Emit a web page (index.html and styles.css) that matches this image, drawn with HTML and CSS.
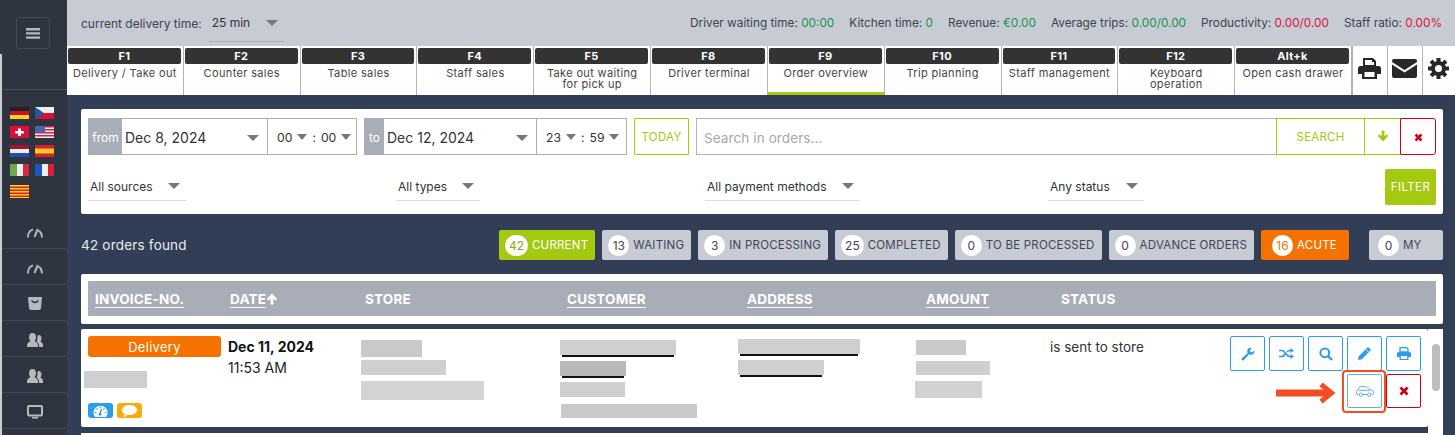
FILE: index.html
```html
<!DOCTYPE html>
<html lang="en">
<head>
<meta charset="utf-8">
<title>Order overview</title>
<link rel="stylesheet" href="styles.css">
</head>
<body>
<div class="app">
  <aside class="sidebar">
    <div class="side-top"><button class="burger"><svg width="14" height="11" viewBox="0 0 14 11"><path d="M0 0h14v2.400H0zM0 4.200h14v2.400H0zM0 8.400h14v2.400H0z" fill="#b5b8bc"/></svg></button></div>
    <div class="flags">
      <svg class="flag" viewBox="0 0 19 12"><path fill="#222" d="M0 0h19v4H0z"/><path fill="#c8102e" d="M0 4h19v4H0z"/><path fill="#fcd116" d="M0 8h19v4H0z"/></svg>
      <svg class="flag" viewBox="0 0 19 12"><path fill="#eee" d="M0 0h19v6H0z"/><path fill="#dc0f37" d="M0 6h19v6H0z"/><path fill="#1c5aa8" d="M0 0l9 6-9 6z"/></svg>
      <svg class="flag" viewBox="0 0 19 12"><path fill="#dc0f37" d="M0 0h19v12H0z"/><path fill="#fff" d="M8 2.500h3V5h2.800v2.500H11V10H8V7.500H5.200V5H8z"/></svg>
      <svg class="flag" viewBox="0 0 19 12"><path fill="#eee" d="M0 0h19v12H0z"/><path fill="#d6223f" d="M0 0h19v1.500H0zM0 3h19v1.500H0zM0 6h19v1.500H0zM0 9h19v1.500H0z"/><path fill="#4a63b5" d="M0 0h10v6.500H0z"/></svg>
      <svg class="flag" viewBox="0 0 19 12"><path fill="#a6132f" d="M0 0h19v4H0z"/><path fill="#eee" d="M0 4h19v4H0z"/><path fill="#1f50b0" d="M0 8h19v4H0z"/></svg>
      <svg class="flag" viewBox="0 0 19 12"><path fill="#d81e30" d="M0 0h19v12H0z"/><path fill="#fac928" d="M0 3.500h19v5H0z"/></svg>
      <svg class="flag" viewBox="0 0 19 12"><path fill="#6fa84e" d="M0 0h7v12H0z"/><path fill="#eee" d="M7 0h6v12H7z"/><path fill="#d8283f" d="M13 0h6v12h-6z"/></svg>
      <svg class="flag" viewBox="0 0 19 12"><path fill="#1f55c0" d="M0 0h7v12H0z"/><path fill="#eee" d="M7 0h6v12H7z"/><path fill="#dc1f35" d="M13 0h6v12h-6z"/></svg>
      <svg class="flag flag-last" viewBox="0 0 19 13"><path fill="#fcd116" d="M0 0h19v13H0z"/><path fill="#d8202c" d="M0 1.500h19V3H0zM0 4.500h19V6H0zM0 7.500h19V9H0zM0 10.500h19V12H0z"/></svg>
    </div>
    <nav class="side-menu">
      <a class="side-item"><svg width="16" height="11" viewBox="0 0 16 11"><path d="M1.200 10.500A7 7 0 0 1 6 2.400M11.500 3.600A7 7 0 0 1 14.800 10.500" fill="none" stroke="#b5b8bc" stroke-width="1.800"/><path d="M7.500 10L10.800 2" stroke="#b5b8bc" stroke-width="2"/></svg></a>
      <a class="side-item"><svg width="16" height="11" viewBox="0 0 16 11"><path d="M1.200 10.500A7 7 0 0 1 6 2.400M11.500 3.600A7 7 0 0 1 14.800 10.500" fill="none" stroke="#b5b8bc" stroke-width="1.800"/><path d="M7.500 10L10.800 2" stroke="#b5b8bc" stroke-width="2"/></svg></a>
      <a class="side-item"><svg width="14" height="14" viewBox="0 0 14 14"><path d="M0 0h14l-1 11q-.2 2-2 2H3q-1.800 0-2-2z" fill="#b5b8bc"/><path d="M3.500 3.500q3.500 4 7 0" fill="none" stroke="#2e3540" stroke-width="1.300"/></svg></a>
      <a class="side-item"><svg width="16" height="15" viewBox="0 0 16 15"><path d="M5.500 0C8 0 9 2 9 4s-.8 3.500-1.500 4.300C9 9 11 10 11 12.500V14H0v-1.500C0 10 2 9 3.500 8.300 2.800 7.500 2 6 2 4s1-4 3.500-4z" fill="#b5b8bc"/><path d="M11.500 2C13.500 2 14.500 3.500 14.500 5.200c0 1.500-.6 2.600-1.200 3.400 1.200.6 2.700 1.400 2.700 3.400V14h-3.800c0-3-1.400-4.500-2.700-5.400.8-1.300 1.200-3 .8-5 .3-.9.800-1.600 1.200-1.600z" fill="#b5b8bc"/></svg></a>
      <a class="side-item"><svg width="16" height="15" viewBox="0 0 16 15"><path d="M5.500 0C8 0 9 2 9 4s-.8 3.500-1.500 4.300C9 9 11 10 11 12.500V14H0v-1.500C0 10 2 9 3.500 8.300 2.800 7.500 2 6 2 4s1-4 3.500-4z" fill="#b5b8bc"/><path d="M11.500 2C13.500 2 14.500 3.500 14.500 5.200c0 1.500-.6 2.600-1.200 3.400 1.200.6 2.700 1.400 2.700 3.400V14h-3.800c0-3-1.400-4.500-2.700-5.400.8-1.300 1.200-3 .8-5 .3-.9.800-1.600 1.200-1.600z" fill="#b5b8bc"/></svg></a>
      <a class="side-item"><svg width="16" height="14" viewBox="0 0 16 14"><rect x="1" y="1" width="14" height="9.500" rx="1" fill="none" stroke="#b5b8bc" stroke-width="2"/><path d="M5 12h6v1.500H5z" fill="#b5b8bc"/></svg></a>
    </nav>
  </aside>

  <main class="main">
    <header class="topbar">
      <div class="delivery"><span>current delivery time:</span><span class="select time-select">25 min<i class="caret"></i></span></div>
      <div class="stats">
        <span>Driver waiting time: <b class="ok">00:00</b></span>
        <span>Kitchen time: <b class="ok">0</b></span>
        <span>Revenue: <b class="ok">€0.00</b></span>
        <span>Average trips: <b class="ok">0.00/0.00</b></span>
        <span>Productivity: <b class="bad">0.00/0.00</b></span>
        <span>Staff ratio: <b class="bad">0.00%</b></span>
      </div>
    </header>

    <nav class="fkeys">
      <a class="fkey"><b>F1</b><span>Delivery / Take out</span></a>
      <a class="fkey"><b>F2</b><span>Counter sales</span></a>
      <a class="fkey"><b>F3</b><span>Table sales</span></a>
      <a class="fkey"><b>F4</b><span>Staff sales</span></a>
      <a class="fkey"><b>F5</b><span>Take out waiting for pick up</span></a>
      <a class="fkey"><b>F8</b><span>Driver terminal</span></a>
      <a class="fkey active"><b>F9</b><span>Order overview</span></a>
      <a class="fkey"><b>F10</b><span>Trip planning</span></a>
      <a class="fkey"><b>F11</b><span>Staff management</span></a>
      <a class="fkey"><b>F12</b><span>Keyboard operation</span></a>
      <a class="fkey last-key"><b>Alt+k</b><span>Open cash drawer</span></a>
      <a class="tool"><svg width="23" height="21" viewBox="0 0 23 21"><path d="M5 0h10l3 3v5H5z" fill="#26282c"/><path d="M7 2h7v2h2v3H7z" fill="#fff"/><path d="M2.500 8h18Q23 8 23 10.500V16h-4v5H4v-5H0v-5.500Q0 8 2.500 8z" fill="#26282c"/><path d="M6.500 14h10v5h-10z" fill="#fff"/></svg></a>
      <a class="tool"><svg width="25" height="19" viewBox="0 0 25 19"><path d="M2 0h21q2 0 2 2v1L12.500 11 0 3V2q0-2 2-2z" fill="#26282c"/><path d="M0 5.500l12.500 8 12.500-8V17q0 2-2 2H2q-2 0-2-2z" fill="#26282c"/></svg></a>
      <a class="tool"><svg width="21" height="21" viewBox="0 0 21 21"><circle cx="10.500" cy="10.500" r="5.500" fill="none" stroke="#26282c" stroke-width="4"/><path d="M10.500 0v21M0 10.500h21M3 3l15 15M18 3L3 18" stroke="#26282c" stroke-width="4" stroke-dasharray="4 13 4"/></svg></a>
    </nav>

    <div class="content">
      <section class="card filter">
        <div class="filter-row">
          <div class="range">
            <span class="addon from">from</span>
            <span class="date-val date-from">Dec 8, 2024<i class="caret"></i></span>
            <span class="time-val"><span>00</span><i class="caret"></i><span>:</span><span>00</span><i class="caret"></i></span>
          </div>
          <div class="range">
            <span class="addon to">to</span>
            <span class="date-val date-to">Dec 12, 2024<i class="caret"></i></span>
            <span class="time-val"><span>23</span><i class="caret"></i><span>:</span><span>59</span><i class="caret"></i></span>
          </div>
          <button class="today">TODAY</button>
          <div class="search">
            <span class="search-input">Search in orders...</span>
            <button class="search-btn">SEARCH</button>
            <button class="down-btn"><svg width="12" height="12" viewBox="0 0 12 12"><path d="M6 11.500L.8 6l1.700-1.700L4.600 6.500V.5h2.800v6L9.500 4.300 11.200 6z" fill="#a3c910"/></svg></button>
            <button class="clear-btn"><svg width="9" height="9" viewBox="0 0 9 9"><path d="M1.500 1.500l6 6M7.500 1.500l-6 6" stroke="#d0021b" stroke-width="2.600"/></svg></button>
          </div>
        </div>
        <div class="filter-row second">
          <span class="select f-sources">All sources<i class="caret"></i></span>
          <span class="select f-types">All types<i class="caret"></i></span>
          <span class="select f-pay">All payment methods<i class="caret"></i></span>
          <span class="select f-status">Any status<i class="caret"></i></span>
          <button class="filter-btn">FILTER</button>
        </div>
      </section>

      <div class="orders-bar">
        <span class="found">42 orders found</span>
        <div class="status-tabs">
          <a class="stab on"><i>42</i>CURRENT</a>
          <a class="stab"><i>13</i>WAITING</a>
          <a class="stab"><i>3</i>IN PROCESSING</a>
          <a class="stab"><i>25</i>COMPLETED</a>
          <a class="stab"><i>0</i>TO BE PROCESSED</a>
          <a class="stab"><i>0</i>ADVANCE ORDERS</a>
          <a class="stab acute"><i>16</i>ACUTE</a>
          <a class="stab my"><i>0</i>MY</a>
        </div>
      </div>

      <section class="card head-card">
        <div class="thead">
          <u>INVOICE-NO.</u>
          <span><u>DATE</u><svg class="sort" width="12" height="12" viewBox="0 0 12 12"><path d="M6 .5l5.200 5.500-1.700 1.700L7.400 5.500v6H4.600v-6L2.500 7.700.8 6z" fill="#fff"/></svg></span>
          <span>STORE</span>
          <u>CUSTOMER</u>
          <u>ADDRESS</u>
          <u>AMOUNT</u>
          <span>STATUS</span>
        </div>
      </section>

      <div class="list">
        <div class="rows">
          <article class="order">
            <div class="c-type">
              <span class="badge">Delivery</span>
              <div class="blob b-inv"></div>
              <div class="mini">
                <span class="mini-i blue"><svg width="15" height="12" viewBox="0 0 15 12"><path d="M2 12A7 7 0 1 1 13 12z" fill="#fff"/><path d="M7 9L8.500 4" stroke="#2b9de9" stroke-width="1.400"/><circle cx="7" cy="9.300" r="1.400" fill="#2b9de9"/><path d="M7.500 1.500v1.500M3.500 3.500l1 1M11.500 3.500l-1 1M1.800 7.500h1.500M11.700 7.500h1.500" stroke="#2b9de9" stroke-width="1.100"/></svg></span>
                <span class="mini-i amber"><svg width="15" height="12" viewBox="0 0 15 12"><path d="M7.500 0C11.500 0 15 2.200 15 5s-3.500 5-7.500 5c-.8 0-1.500-.1-2.200-.2C4.200 11 2.800 11.700 1.500 12c.8-1 1.300-2 1.300-3C1 8 0 6.600 0 5 0 2.200 3.500 0 7.500 0z" fill="#fff"/></svg></span>
              </div>
            </div>
            <div class="c-date"><strong>Dec 11, 2024</strong><span>11:53 AM</span></div>
            <div class="c-store">
              <div class="blob b61"></div><div class="blob b85"></div><div class="blob b123"></div>
            </div>
            <div class="c-cust">
              <div class="blob b116 lined"></div><div class="blob b66 lined dark"></div><div class="blob b65"></div><div class="blob b136"></div>
            </div>
            <div class="c-addr">
              <div class="blob b122 lined"></div><div class="blob b86 lined"></div>
            </div>
            <div class="c-amount">
              <div class="blob b50"></div><div class="blob b74"></div><div class="blob b67"></div>
            </div>
            <div class="c-status">is sent to store</div>
            <div class="c-actions">
              <div class="act-row">
                <button class="act"><svg width="14" height="14" viewBox="0 0 14 14"><path d="M13.500 3.400L11 5.600 8.600 3.900 10.600.8Q7.800.1 6.500 2.600 5.900 4.100 6.700 5.900L.8 11.300Q.3 12 1 12.900q1 .9 1.800.2L8.200 7.300Q10.800 8.500 12.600 6.500 13.800 5.100 13.500 3.400z" fill="#2b9de9"/></svg></button>
                <button class="act"><svg width="15" height="11" viewBox="0 0 15 11"><path d="M0 2.500h3c3 0 4.500 6 7.500 6H12M0 8.500h3c1.500 0 2.500-1.500 3-2.500M8 4c.6-.8 1.500-1.500 2.500-1.500H12" fill="none" stroke="#2b9de9" stroke-width="1.700"/><path d="M11.500 0L15 2.500 11.500 5zM11.500 6L15 8.500 11.500 11z" fill="#2b9de9"/></svg></button>
                <button class="act"><svg width="14" height="14" viewBox="0 0 14 14"><circle cx="5.800" cy="5.800" r="4.400" fill="none" stroke="#2b9de9" stroke-width="2"/><path d="M9 9l4 4" stroke="#2b9de9" stroke-width="2.400"/></svg></button>
                <button class="act"><svg width="13" height="13" viewBox="0 0 13 13"><path d="M0 13l.8-3.800L9.500.5q.6-.5 1.200 0l1.800 1.800q.5.600 0 1.200L3.800 12.200z" fill="#2b9de9"/><path d="M8 2.500l2.500 2.500" stroke="#fff" stroke-width=".8"/></svg></button>
                <button class="act"><svg width="14" height="13" viewBox="0 0 14 13"><path d="M3 .7h6.500L11 2v3H3z" fill="none" stroke="#2b9de9" stroke-width="1.300"/><path d="M1.500 5h11Q14 5 14 6.500V10h-2.500v3h-9v-3H0V6.500Q0 5 1.500 5z" fill="#2b9de9"/><path d="M3.800 9h6.400v2.900H3.800z" fill="#fff"/></svg></button>
              </div>
              <div class="act-row">
                <button class="act car"><svg width="18" height="11" viewBox="0 0 18 11"><path d="M3 8.500H1.500q-1-.1-1-1V5.500q0-1 1-1.300L3.500 1.200Q4 .6 5 .6h4.500q1 0 1.700.6l3 2.400 2 .6q1.200.4 1.200 1.300v1.500q0 1.300-1 1.500h-1M6.500 8.500h5M3 4.300h11" fill="none" stroke="#5cb3ee" stroke-width="1"/><circle cx="4.800" cy="8.700" r="1.700" fill="none" stroke="#5cb3ee"/><circle cx="13.300" cy="8.700" r="1.700" fill="none" stroke="#5cb3ee"/></svg></button>
                <button class="act del"><svg width="10" height="10" viewBox="0 0 10 10"><path d="M1.500 1.500l7 7M8.500 1.500l-7 7" stroke="#c4021b" stroke-width="2.800"/></svg></button>
              </div>
              <span class="mark"></span>
              <svg class="arrow" width="60" height="22" viewBox="0 0 60 22"><path d="M0 11h54" fill="none" stroke="#f44d22" stroke-width="7"/><path d="M45 2.500L55.500 11 45 19.500" fill="none" stroke="#f44d22" stroke-width="5"/></svg>
            </div>
          </article>
          <div class="order-next"></div>
        </div>
        <div class="scrolltrack"><span class="thumb"></span></div>
      </div>
    </div>
  </main>
</div>
</body>
</html>
```

FILE: styles.css
```css
* { box-sizing: border-box; }
html, body { margin: 0; height: 435px; overflow: hidden; }
body { font-family: Inter, "Liberation Sans", sans-serif; font-size: 13px; color: #333; background: #323e56; }
button { font-family: inherit; cursor: pointer; background: #fff; padding: 0; margin: 0; }
a { display: block; }
i { font-style: normal; }

.app { display: flex; height: 435px; overflow: hidden; }

/* sidebar */
.sidebar { width: 67px; flex: none; background: #2e3540; border-left: 2px solid #c9ccd0; border-image: linear-gradient(#2e3540 55px, #c9ccd0 55px) 1; overflow: hidden; }
.side-top { height: 90px; padding: 17px 0 0 14px; border-bottom: 1px solid #4a505a; }
.burger { width: 34px; height: 32px; background: transparent; border: 1px solid #464c57; border-radius: 3px; display: flex; align-items: center; justify-content: center; }
.flags { height: 123px; padding: 17px 0 0 8px; display: grid; grid-template-columns: 19px 19px; column-gap: 6px; grid-auto-rows: 12px; row-gap: 7px; }
.flag { width: 19px; height: 12px; display: block; }
.flag-last { height: 13px; margin-top: 2px; }
.side-item { height: 36px; border-bottom: 1px solid #434954; display: flex; align-items: center; justify-content: center; padding-top: 3px; }

/* main */
.main { flex: 1; min-width: 0; display: flex; flex-direction: column; }
.topbar { height: 46px; flex: none; background: #c7cbd3; display: flex; justify-content: space-between; align-items: center; padding: 0 13px 0 14px; font-size: 12px; color: #3d4350; }
.delivery { display: flex; align-items: center; gap: 7px; }
.time-select { width: 75px; height: 37px; padding: 0 6px 0 3px; border-bottom: 1px solid #aab0ba; }
.stats { display: flex; gap: 15px; font-size: 11.800px; }
.stats b { font-weight: 400; }
.ok { color: #16964a; }
.bad { color: #dc143c; }

.select { display: flex; align-items: center; justify-content: space-between; color: #333; }
.caret { display: inline-block; width: 0; height: 0; border-left: 6px solid transparent; border-right: 6px solid transparent; border-top: 6px solid #777; }

.fkeys { height: 49px; flex: none; display: flex; background: #fff; }
.fkey { flex: 1 1 0; min-width: 0; height: 49px; border-right: 1px solid #b0b4bd; padding: 2px 1px 0; text-align: center; color: #444; }
.fkey b { display: block; height: 16px; line-height: 17px; background: #333; border-radius: 2px; color: #fff; font-size: 11px; font-weight: 700; margin-right: 1px; letter-spacing: .3px; }
.fkey span { display: block; padding: 0 4px; margin-top: 4px; font-size: 11px; line-height: 11px; letter-spacing: .35px; }
.fkey.active { border-bottom: 3px solid #a3c910; }
.last-key { border-right-width: 2px; }
.tool { width: 35px; flex: none; height: 49px; border-right: 1px solid #b0b4bd; display: flex; align-items: center; justify-content: center; padding-bottom: 4px; }
.tool:last-child { border-right: 0; width: 32px; }

.content { flex: 1; min-height: 0; padding: 14px 12px 0 14px; background: #323e56; }
.card { background: #fff; border-radius: 2px; }

/* filter */
.filter { height: 105px; padding: 9px 7px 0; }
.filter-row { display: flex; height: 37px; }
.filter-row.second { height: 36px; margin-top: 14px; align-items: stretch; }
.range { display: flex; height: 37px; border: 1px solid #a9adb8; margin-right: 7px; font-size: 14px; color: #333; }
.addon { background: #a9adb8; color: #fff; font-size: 12px; padding-top: 1px; display: flex; align-items: center; justify-content: center; }
.addon.from { width: 33px; }
.addon.to { width: 19px; }
.date-val { display: flex; align-items: center; justify-content: space-between; padding: 2px 4px 0 3px; border-right: 1px solid #a9adb8; }
.date-from { width: 146px; }
.date-to { width: 153px; }
.time-val { display: flex; align-items: center; gap: 5px; padding: 1px 3px 0 9px; font-size: 12.200px; }
.date-val .caret { margin-right: 4px; }
.time-val .caret { border-left-width: 5.500px; border-right-width: 5.500px; border-top-width: 6px; }
.range:nth-child(1) .time-val { width: 88px; }
.range:nth-child(2) .time-val { width: 89px; }
.today { width: 55px; height: 37px; border: 1px solid #a3c910; color: #a3c910; font-size: 11.500px; letter-spacing: .3px; border-radius: 1px; margin-right: 7px; padding-top: 1px; }
.search { flex: 1; display: flex; height: 37px; }
.search-input { flex: 1; border: 1px solid #b0b4bd; border-right: 0; color: #a5a8ad; font-size: 13.500px; display: flex; align-items: center; padding: 2px 0 0 7px; letter-spacing: .1px; }
.search-btn { width: 88px; flex: none; border: 1px solid #a3c910; border-right: 0; color: #a3c910; font-size: 11.500px; letter-spacing: .2px; padding-top: 1px; }
.down-btn { width: 36px; flex: none; border: 1px solid #a3c910; border-right: 0; }
.clear-btn { width: 36px; flex: none; border: 1px solid #d0021b; border-radius: 0 3px 3px 0; }

.second .select { height: 32px; border-bottom: 1px solid #dcdcdc; font-size: 12px; padding: 3px 6px 0 2px; }
.f-sources { width: 98px; margin-right: 210px; }
.f-types { width: 84px; margin-right: 225px; }
.f-pay { width: 155px; margin-right: 188px; }
.f-status { width: 96px; }
.filter-btn { width: 51px; height: 36px; margin-left: auto; background: #a3c910; border: 0; border-radius: 2px; color: #fff; font-size: 11.500px; letter-spacing: .4px; }

/* orders bar */
.orders-bar { height: 60px; padding-top: 2px; display: flex; justify-content: space-between; align-items: center; }
.found { color: #e9ecef; font-size: 13.500px; letter-spacing: .2px; }
.status-tabs { display: flex; gap: 7px; }
.stab { height: 30px; background: #c7cbd3; border-radius: 2px; color: #3f4658; font-size: 11.500px; letter-spacing: .22px; display: flex; align-items: center; justify-content: center; gap: 4px; padding: 0 7px 0 6px; }
.stab i { min-width: 21px; height: 21px; padding: 0 4px; border-radius: 11px; background: #fff; display: flex; align-items: center; justify-content: center; letter-spacing: 0; font-size: 12px; }
.stab.on { background: #a3c910; color: #fff; }
.stab.on i { color: #8aab10; }
.stab.acute { width: 88px; background: #f57200; color: #fff; margin-right: 13px; }
.stab.acute i { color: #f57200; }
.stab.my { width: 74px; justify-content: flex-start; padding-left: 9px; }

/* head */
.head-card { height: 50px; padding: 7px; }
.thead { height: 35px; background: #a9adb8; display: grid; grid-template-columns: 135px 135px 202px 180px 179px 135px 1fr; align-items: center; padding-left: 7px; color: #fff; font-weight: 700; font-size: 13.500px; letter-spacing: .2px; }
.thead u { justify-self: start; text-underline-offset: 3px; }
.thead span { display: flex; align-items: center; }

/* list */
.list { display: flex; margin-top: 5px; }
.rows { flex: 1; min-width: 0; }
.order { height: 98px; background: #fff; border-radius: 2px; display: grid; grid-template-columns: 140px 133px 199px 178px 178px 134px 180px 1fr; padding: 7px 0 0 7px; }
.order-next { height: 10px; margin-top: 6px; background: #fff; }
.scrolltrack { width: 15px; flex: none; height: 110px; background: #fff; padding: 15px 4px 0; }
.thumb { display: block; width: 8px; height: 47px; border-radius: 4px; background: #bdbdbd; }

.badge { display: block; width: 133px; height: 21px; background: #f57200; border-radius: 3px; color: #fff; font-size: 13px; line-height: 22px; text-align: center; letter-spacing: .3px; }
.b-inv { width: 63px; height: 17px; margin: 14px 0 0 -4px; background: #c8c8c8; }
.mini { display: flex; gap: 4px; margin-top: 15px; }
.mini-i { width: 25px; height: 15px; border-radius: 3px; display: flex; align-items: center; justify-content: center; }
.blue { background: #2b9de9; }
.amber { background: #fba90c; }

.c-date { display: flex; flex-direction: column; font-size: 14px; color: #222; padding-top: 2px; }
.c-date strong { color: #111; font-weight: 700; line-height: 18px; }
.c-date span { margin-top: 3px; line-height: 18px; }

.blob { background: #cfcfcf; }
.c-store, .c-cust, .c-addr, .c-amount { padding-top: 4px; }
.c-store .blob, .c-cust .blob, .c-amount .blob, .c-addr .blob { margin-bottom: 6px; }
.b61 { width: 61px; height: 17px; background: #c9c9c9; }
.b85 { width: 85px; height: 15px; margin-top: -3px; }
.b123 { width: 123px; height: 19px; background: #d4d4d4; }
.c-cust .lined, .c-addr .lined { height: 17px; margin-bottom: 4px; background: linear-gradient(#111, #111) center bottom / calc(100% - 4px) 2px no-repeat, linear-gradient(#cfcfcf, #cfcfcf) top / 100% 15px no-repeat; }
.c-cust .dark { background: linear-gradient(#111, #111) center bottom / calc(100% - 4px) 2px no-repeat, linear-gradient(#b8b8b8, #b8b8b8) top / 100% 15px no-repeat; }
.b116 { width: 116px; }
.b66 { width: 66px; }
.b65 { width: 65px; height: 15px; }
.c-cust .b65 { margin-bottom: 7px; }
.b136 { width: 136px; height: 14px; margin-left: 1px; background: #c9c9c9; }
.b122 { width: 122px; margin-top: -1px; }
.b86 { width: 86px; }
.b50 { width: 50px; height: 15px; background: #cacaca; }
.b74 { width: 74px; height: 14px; }
.b67 { width: 67px; height: 17px; margin-left: -1px; background: #d2d2d2; }

.c-status { color: #333; font-size: 13.500px; padding-top: 3px; line-height: 16px; }

.c-actions { position: relative; display: flex; flex-direction: column; align-items: flex-end; padding-right: 7px; gap: 3px; }
.act-row { display: flex; gap: 4px; }
.act { width: 35px; height: 35px; border: 1px solid #2b9de9; border-radius: 2px; display: flex; align-items: center; justify-content: center; }
.act-row:nth-child(2) .act { height: 34px; }
.car { border-color: #5cb3ee; }
.del { border-color: #c4021b; }
.mark { position: absolute; right: 42px; top: 34px; width: 44px; height: 43px; border: 2px solid #f44d22; border-radius: 4px; }
.arrow { position: absolute; right: 92px; top: 46px; }
```
